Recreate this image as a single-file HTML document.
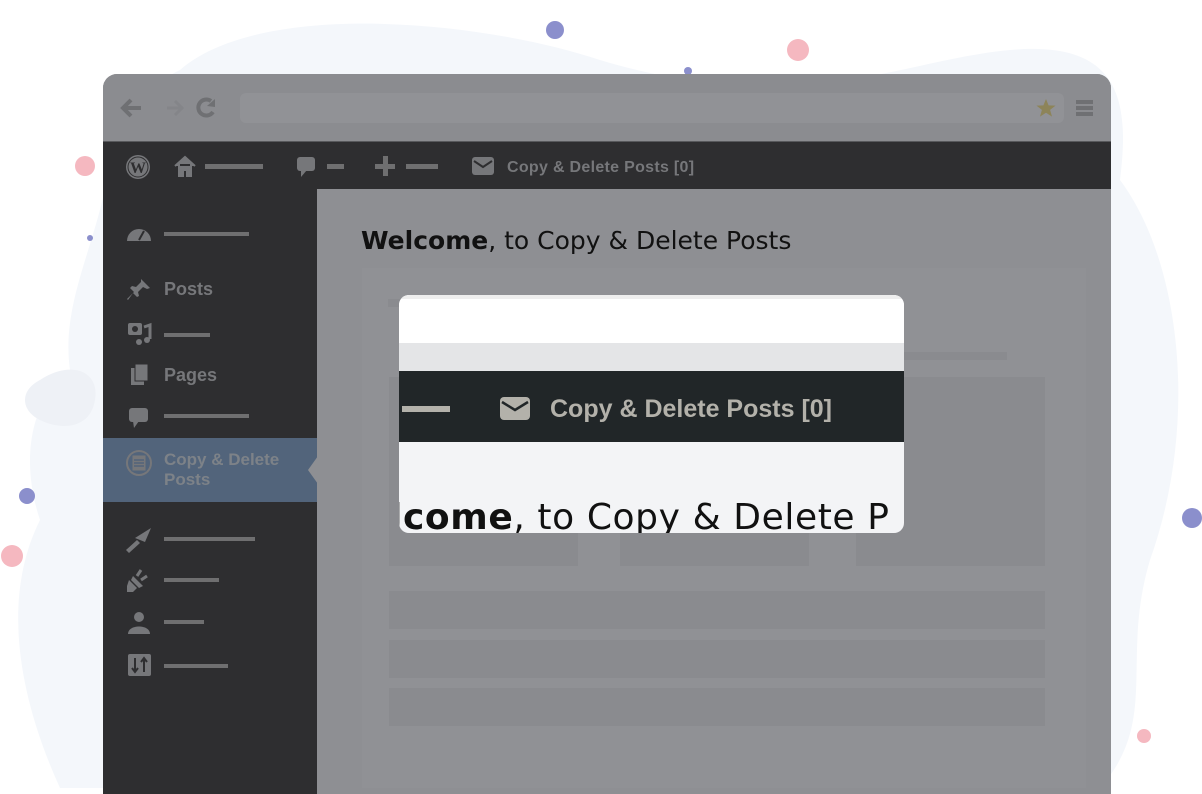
<!DOCTYPE html>
<html><head><style>
*{margin:0;padding:0;box-sizing:border-box}
body{width:1202px;height:788px;overflow:hidden;background:#fff;position:relative;font-family:"Liberation Sans",sans-serif}
.a{position:absolute}
.dot{position:absolute;border-radius:50%}
.line{position:absolute;height:4px;background:#6f6f70}
.sb{color:#76777a;font-weight:bold;font-size:18px}
.blk{position:absolute;background:#8a8b8f}
</style></head><body>
<svg class="a" style="left:0;top:0" width="1202" height="788">
<path d="M180 70 C260 0 480 20 600 60 C800 120 900 60 1010 50 C1120 40 1130 100 1120 180 C1180 260 1200 420 1150 560 C1120 660 1160 720 1100 788 L60 788 C20 700 0 600 40 520 C20 460 30 400 70 370 C60 300 100 240 110 160 C120 110 140 90 180 70 Z" fill="#f4f7fb"/>
<path d="M40 380 C70 360 100 370 95 400 C90 430 60 430 40 420 C20 410 20 390 40 380Z" fill="#eef1f6"/>
</svg>
<div class="dot" style="left:546px;top:21px;width:18px;height:18px;background:#8b8fcc"></div>
<div class="dot" style="left:787px;top:39px;width:22px;height:22px;background:#f5b8c0"></div>
<div class="dot" style="left:684px;top:67px;width:8px;height:8px;background:#8b8fcc"></div>
<div class="dot" style="left:75px;top:156px;width:20px;height:20px;background:#f5b8c0"></div>
<div class="dot" style="left:87px;top:235px;width:6px;height:6px;background:#8b8fcc"></div>
<div class="dot" style="left:19px;top:488px;width:16px;height:16px;background:#8b8fcc"></div>
<div class="dot" style="left:1px;top:545px;width:22px;height:22px;background:#f5b8c0"></div>
<div class="dot" style="left:1182px;top:508px;width:20px;height:20px;background:#8b8fcc"></div>
<div class="dot" style="left:1137px;top:729px;width:14px;height:14px;background:#f5b8c0"></div>

<div class="a" style="left:103px;top:74px;width:1008px;height:720px;border-radius:14px 14px 0 0;overflow:hidden;background:#8e8f93">
 <div class="a" style="left:0;top:0;width:1008px;height:67px;background:#8b8c90"></div>
 <div class="a" style="left:137px;top:19px;width:824px;height:30px;border-radius:6px;background:#919296"></div>
 <svg class="a" style="left:16px;top:22px" width="100" height="24"><path d="M22 12H4M12 4L4 12L12 20" stroke="#6f7073" stroke-width="4" fill="none"/><path d="M64 12H48M56 5L63 12L56 19" stroke="#848589" stroke-width="3" fill="none"/><path d="M104 5 A8 8 0 1 0 106 16" transform="translate(-12,0)" stroke="#6f7073" stroke-width="4" fill="none"/><path d="M96 3L96 11L88 10Z" fill="#6f7073"/></svg>
 <svg class="a" style="left:933px;top:24px" width="20" height="20"><path d="M10 1L12.6 7.4L19.5 7.6L14.1 11.9L16 18.6L10 14.7L4 18.6L5.9 11.9L0.5 7.6L7.4 7.4Z" fill="#8d8459"/></svg>
 <div class="a" style="left:973px;top:26px;width:17px;height:4px;background:#6f7073"></div>
 <div class="a" style="left:973px;top:32px;width:17px;height:4px;background:#6f7073"></div>
 <div class="a" style="left:973px;top:38px;width:17px;height:4px;background:#6f7073"></div>

 <div class="a" style="left:0;top:67px;width:1008px;height:48px;background:#2e2e30;border-top:1px solid #58595c"></div>
 <svg class="a" style="left:22px;top:80px" width="26" height="26"><circle cx="13" cy="13" r="12" fill="#76777a"/><circle cx="13" cy="13" r="10" fill="none" stroke="#2e2e30" stroke-width="1"/><text x="13" y="19" font-size="16" font-family="Liberation Serif" font-weight="bold" fill="#2e2e30" text-anchor="middle">W</text></svg>
 <svg class="a" style="left:70px;top:81px" width="24" height="22"><path d="M2 11L12 2L22 11M6 9V21H10V15H14V21H18V9" fill="#76777a" stroke="#76777a" stroke-width="2"/></svg>
 <div class="line" style="left:102px;top:90px;width:58px;height:5px"></div>
 <svg class="a" style="left:193px;top:82px" width="20" height="22"><rect x="1" y="1" width="18" height="14" rx="3" fill="#76777a"/><path d="M5 14L5 21L11 14Z" fill="#76777a"/></svg>
 <div class="line" style="left:224px;top:90px;width:17px;height:5px"></div>
 <div class="line" style="left:272px;top:90px;width:20px;height:5px"></div>
 <div class="line" style="left:280px;top:82px;width:5px;height:20px"></div>
 <div class="line" style="left:303px;top:90px;width:32px;height:5px"></div>
 <svg class="a" style="left:369px;top:83px" width="22" height="18"><rect x="0" y="0" width="22" height="18" rx="3" fill="#76777a"/><path d="M2 4L11 10L20 4" stroke="#2e2e30" stroke-width="2" fill="none"/></svg>
 <div class="a sb" style="left:404px;top:85px;font-size:16px;letter-spacing:0.3px">Copy &amp; Delete Posts [0]</div>

 <div class="a" style="left:0;top:115px;width:214px;height:610px;background:#2e2e30"></div>
 <svg class="a" style="left:22px;top:150px" width="28" height="18"><path d="M2 17A12 12 0 0 1 26 17Z" fill="#76777a"/><path d="M14 16L19 7" stroke="#2e2e30" stroke-width="2"/></svg>
 <div class="line" style="left:61px;top:158px;width:85px"></div>
 <svg class="a" style="left:24px;top:204px" width="24" height="24"><path d="M14 1L23 10L20 11L16 9L11 14L12 18L10 19L6 15L1 22L0 21L7 14L3 10L5 8L9 9L14 4Z" fill="#76777a"/></svg>
 <div class="a sb" style="left:61px;top:205px">Posts</div>
 <svg class="a" style="left:25px;top:247px" width="24" height="26"><rect x="0" y="2" width="14" height="12" rx="2" fill="#76777a"/><circle cx="7" cy="8" r="3" fill="#2e2e30"/><path d="M16 6L22 4V18" stroke="#76777a" stroke-width="3" fill="none"/><circle cx="11" cy="21" r="3" fill="#76777a"/><circle cx="19" cy="19" r="3" fill="#76777a"/></svg>
 <div class="line" style="left:61px;top:259px;width:46px"></div>
 <svg class="a" style="left:28px;top:290px" width="20" height="22"><rect x="0" y="4" width="13" height="17" fill="#76777a"/><rect x="4" y="0" width="13" height="17" fill="#76777a" stroke="#2e2e30" stroke-width="1"/></svg>
 <div class="a sb" style="left:61px;top:291px">Pages</div>
 <svg class="a" style="left:25px;top:333px" width="22" height="22"><rect x="1" y="1" width="19" height="14" rx="3" fill="#76777a"/><path d="M5 14L6 21L11 14Z" fill="#76777a"/></svg>
 <div class="line" style="left:61px;top:340px;width:85px"></div>
 <div class="a" style="left:0;top:364px;width:214px;height:64px;background:#52647b"></div>
 <svg class="a" style="left:205px;top:382px" width="10" height="28"><path d="M10 0L0 14L10 28Z" fill="#8e8f93"/></svg>
 <svg class="a" style="left:22px;top:374px" width="30" height="30"><circle cx="14" cy="15" r="12" fill="none" stroke="#76777a" stroke-width="2"/><rect x="7" y="7" width="14" height="16" fill="#76777a" stroke="#52647b" stroke-width="1"/><path d="M9 12H19M9 15H19M9 18H19" stroke="#52647b" stroke-width="1.5"/></svg>
 <div class="a sb" style="left:61px;top:376px;font-size:17px;line-height:20px;color:#7d8288">Copy &amp; Delete<br>Posts</div>
 <svg class="a" style="left:20px;top:452px" width="30" height="28"><path d="M12 12L28 2L22 16Z" fill="#76777a"/><path d="M14 14L3 24L6 27L17 17Z" fill="#76777a"/></svg>
 <div class="line" style="left:61px;top:463px;width:91px"></div>
 <svg class="a" style="left:22px;top:494px" width="26" height="26"><path d="M4 12L12 20L8 24L2 24L2 18Z" fill="#76777a"/><path d="M8 8L18 18L14 20L6 12Z" fill="#76777a"/><path d="M12 8L16 2M16 12L22 8" stroke="#76777a" stroke-width="3"/></svg>
 <div class="line" style="left:61px;top:504px;width:55px"></div>
 <svg class="a" style="left:24px;top:536px" width="24" height="24"><circle cx="12" cy="7" r="5" fill="#76777a"/><path d="M1 24C1 14 23 14 23 24Z" fill="#76777a"/></svg>
 <div class="line" style="left:61px;top:546px;width:40px"></div>
 <svg class="a" style="left:25px;top:580px" width="24" height="24"><rect x="0" y="0" width="23" height="22" rx="2" fill="#76777a"/><path d="M7 4V18M4 14L7 18L10 14M16 18V4M13 8L16 4L19 8" stroke="#2e2e30" stroke-width="2" fill="none"/></svg>
 <div class="line" style="left:61px;top:590px;width:64px"></div>

 <div class="a" style="left:258px;top:152px;font-size:25px;color:#111;font-family:'DejaVu Sans',sans-serif;letter-spacing:0px"><b>Welcome</b>, to Copy &amp; Delete Posts</div>
 <div class="a" style="left:259px;top:194px;width:724px;height:520px;background:#909195"></div>
 <div class="blk" style="left:285px;top:225px;width:24px;height:8px"></div>
 <div class="blk" style="left:801px;top:278px;width:103px;height:8px"></div>
 <div class="blk" style="left:286px;top:303px;width:189px;height:189px"></div>
 <div class="blk" style="left:517px;top:303px;width:189px;height:189px"></div>
 <div class="blk" style="left:753px;top:303px;width:189px;height:189px"></div>
 <div class="blk" style="left:286px;top:517px;width:656px;height:38px"></div>
 <div class="blk" style="left:286px;top:566px;width:656px;height:38px"></div>
 <div class="blk" style="left:286px;top:614px;width:656px;height:38px"></div>
</div>

<div class="a" style="left:399px;top:295px;width:505px;height:238px;border-radius:10px;overflow:hidden;background:#f3f4f6">
 <div class="a" style="left:0;top:0;width:505px;height:48px;background:#fff;border-top:4px solid #eee"></div>
 <div class="a" style="left:0;top:48px;width:505px;height:28px;background:#e4e5e7"></div>
 <div class="a" style="left:0;top:76px;width:505px;height:71px;background:#212628"></div>
 <div class="a" style="left:3px;top:111px;width:48px;height:6px;background:#b3b1aa"></div>
 <svg class="a" style="left:101px;top:102px" width="30" height="23"><rect x="0" y="0" width="30" height="23" rx="4" fill="#b3b1aa"/><path d="M2 5L15 13L28 5" stroke="#212628" stroke-width="2.5" fill="none"/></svg>
 <div class="a" style="left:151px;top:100px;font-size:25px;font-weight:bold;color:#b3b1aa;letter-spacing:0px">Copy &amp; Delete Posts [0]</div>
 <div class="a" style="left:-9px;top:202px;font-size:36px;color:#111;font-family:'DejaVu Sans',sans-serif;letter-spacing:0.6px;white-space:nowrap"><b>lcome</b>, to Copy &amp; Delete P</div>
</div>
</body></html>
